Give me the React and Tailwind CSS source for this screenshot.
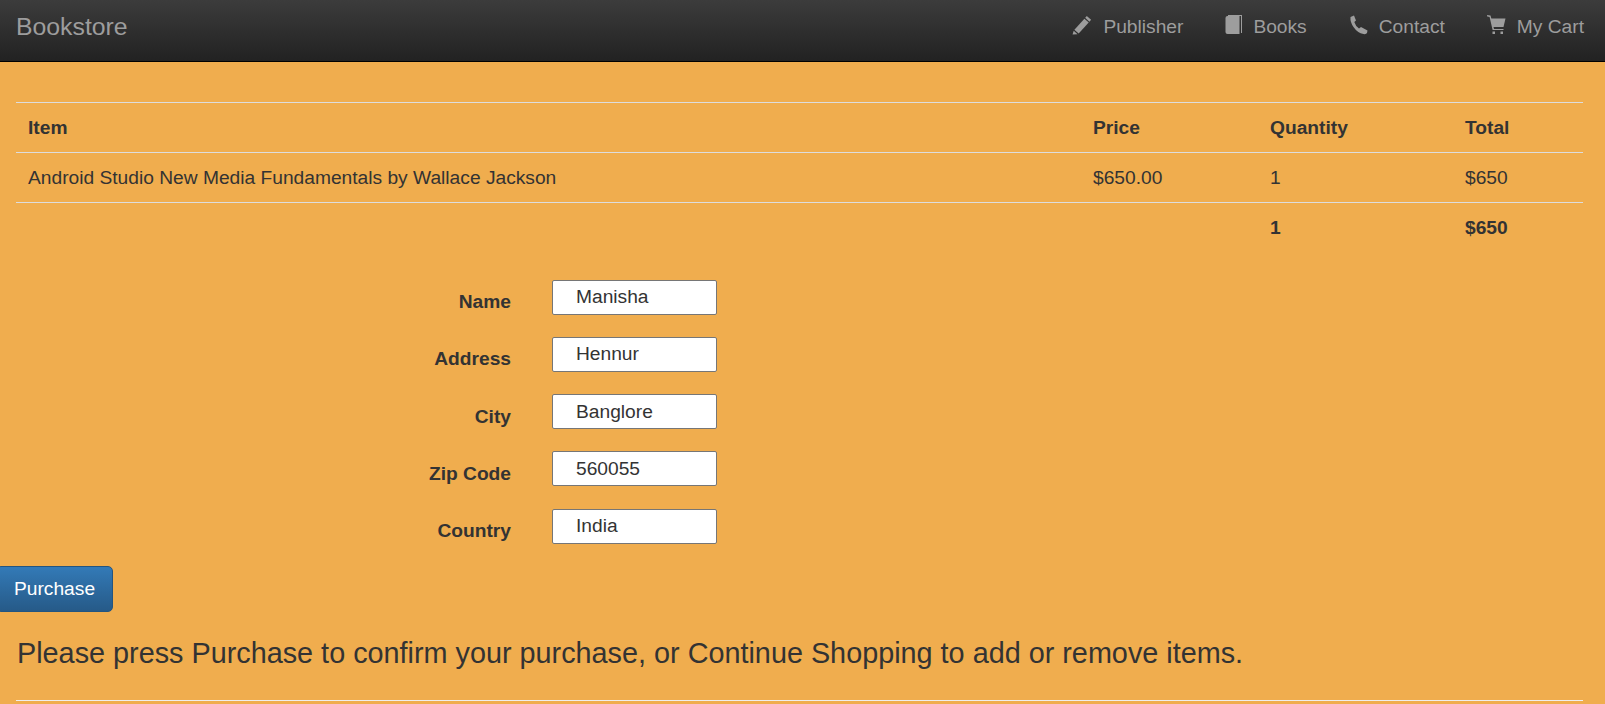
const NAV_ITEMS = [
  {
    label: "Publisher",
    icon: (
      <svg width="21" height="20" viewBox="0 0 22 20" fill="currentColor">
        <path d="M15.5 0.5 L20 4.5 L18.3 6.5 L13.8 2.5 Z" />
        <path d="M13 3.4 L17.5 7.4 L7 19 L2.5 15 Z" />
        <path d="M1.8 16 L5.8 19.6 L0.6 20 Z" />
      </svg>
    ),
  },
  {
    label: "Books",
    icon: (
      <svg width="18" height="20" viewBox="0 0 18 20" fill="currentColor">
        <path d="M2.5 1 L14.5 1 L14.5 19 L2.5 19 Q0.5 19 0.5 17 L0.5 3 Q0.5 1 2.5 1 Z" />
        <path d="M3 0 L17 0 L17 18 L16 18 L16 1 L3 1 Z" />
      </svg>
    ),
  },
  {
    label: "Contact",
    icon: (
      <svg width="20" height="20" viewBox="0 0 19 20" fill="currentColor">
        <path d="M1 2 L4.5 0.5 L6.5 5.5 L4.8 7 Q6 11 9.5 13.5 L11.5 12 L18 15.5 L17.5 18 Q16.5 19.6 14 19 Q8 18 4 12 Q0.5 7 1 2 Z" />
      </svg>
    ),
  },
  {
    label: "My Cart",
    icon: (
      <svg width="20" height="20" viewBox="0 0 20 20" fill="currentColor">
        <path d="M0 0 L3.5 0.6 L4.4 3.5 L18.5 3.5 L16.5 12 L6.5 12 L7 14 L16.5 14 L16.5 15 L5.6 15 L2.6 2 L0.2 1.4 Z" />
        <rect x="5.5" y="16.5" width="2.5" height="2.5" />
        <rect x="13.5" y="16.5" width="2.5" height="2.5" />
      </svg>
    ),
  },
];

const FIELDS = [
  { label: "Name", value: "Manisha" },
  { label: "Address", value: "Hennur" },
  { label: "City", value: "Banglore" },
  { label: "Zip Code", value: "560055" },
  { label: "Country", value: "India" },
];

function App() {
  return (
    <div className="h-[704px] overflow-hidden bg-[#f0ad4e] text-[19.2px] leading-[26px] text-[#333333] font-['Liberation_Sans',Arial,sans-serif]">
      {/* navbar */}
      <nav className="flex h-[62px] items-center justify-between border-b border-black bg-gradient-to-b from-[#3c3c3c] to-[#222222] pb-2 pl-4 pr-[21px] text-[#9d9d9d]">
        <span className="text-[24.8px]">Bookstore</span>
        <ul className="flex items-center gap-[42px]">
          {NAV_ITEMS.map((item) => (
            <li key={item.label} className="flex items-center gap-[10px]">
              <span className="mb-[3px] flex">{item.icon}</span>
              {item.label}
            </li>
          ))}
        </ul>
      </nav>

      <main className="pl-4 pr-[22px] pt-10">
        {/* cart */}
        <table className="w-full table-fixed border-collapse">
          <colgroup>
            <col className="w-[1065px]" />
            <col className="w-[177px]" />
            <col className="w-[195px]" />
            <col />
          </colgroup>
          <thead>
            <tr className="h-[50px] border-y border-[#dddddd] text-left">
              <th className="px-3 font-bold">Item</th>
              <th className="px-3 font-bold">Price</th>
              <th className="px-3 font-bold">Quantity</th>
              <th className="px-3 font-bold">Total</th>
            </tr>
          </thead>
          <tbody>
            <tr className="h-[50px] border-b border-[#dddddd]">
              <td className="px-3">Android Studio New Media Fundamentals by Wallace Jackson</td>
              <td className="px-3">$650.00</td>
              <td className="px-3">1</td>
              <td className="px-3">$650</td>
            </tr>
            <tr className="h-[50px] font-bold">
              <td className="px-3"></td>
              <td className="px-3"></td>
              <td className="px-3">1</td>
              <td className="px-3">$650</td>
            </tr>
          </tbody>
        </table>

        {/* shipping details */}
        <form className="mt-[27px] flex flex-col gap-[22.25px]">
          {FIELDS.map((field) => (
            <div key={field.label} className="flex h-[35px] items-center gap-[41px]">
              <label className="mt-[10px] w-[495px] text-right font-bold">{field.label}</label>
              <input
                type="text"
                defaultValue={field.value}
                className="h-[35px] w-[165px] rounded-[2px] border border-[#767676] bg-white pl-[23px] pr-2 text-[#333333]"
              />
            </div>
          ))}
        </form>

        <button
          type="button"
          className="-ml-5 mt-[22px] block h-[46px] rounded-[5px] border border-[#245580] bg-gradient-to-b from-[#337ab7] to-[#265a88] pl-[17px] pr-[17px] text-white"
        >
          Purchase
        </button>

        <p className="ml-px mt-[22px] text-[28.8px] leading-[39px]">
          Please press Purchase to confirm your purchase, or Continue Shopping to add or remove items.
        </p>
        <hr className="mt-[27px] border-t border-[#eeeeee]" />
      </main>
    </div>
  );
}

export default App;
